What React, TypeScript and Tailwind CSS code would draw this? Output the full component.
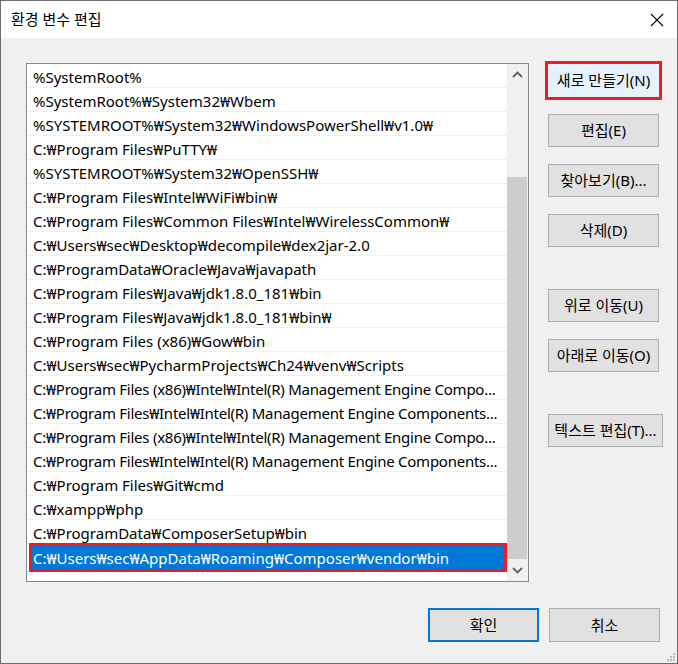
import React from "react";

const paths: string[] = [
  "%SystemRoot%",
  "%SystemRoot%₩System32₩Wbem",
  "%SYSTEMROOT%₩System32₩WindowsPowerShell₩v1.0₩",
  "C:₩Program Files₩PuTTY₩",
  "%SYSTEMROOT%₩System32₩OpenSSH₩",
  "C:₩Program Files₩Intel₩WiFi₩bin₩",
  "C:₩Program Files₩Common Files₩Intel₩WirelessCommon₩",
  "C:₩Users₩sec₩Desktop₩decompile₩dex2jar-2.0",
  "C:₩ProgramData₩Oracle₩Java₩javapath",
  "C:₩Program Files₩Java₩jdk1.8.0_181₩bin",
  "C:₩Program Files₩Java₩jdk1.8.0_181₩bin₩",
  "C:₩Program Files (x86)₩Gow₩bin",
  "C:₩Users₩sec₩PycharmProjects₩Ch24₩venv₩Scripts",
  "C:₩Program Files (x86)₩Intel₩Intel(R) Management Engine Compo...",
  "C:₩Program Files₩Intel₩Intel(R) Management Engine Components...",
  "C:₩Program Files (x86)₩Intel₩Intel(R) Management Engine Compo...",
  "C:₩Program Files₩Intel₩Intel(R) Management Engine Components...",
  "C:₩Program Files₩Git₩cmd",
  "C:₩xampp₩php",
  "C:₩ProgramData₩ComposerSetup₩bin",
];

const selected = "C:₩Users₩sec₩AppData₩Roaming₩Composer₩vendor₩bin";

const font = "font-['Noto_Sans','Noto_Sans_CJK_KR',sans-serif]";

// plain win10 style button
const Btn = ({ label, wide }: { label: string; wide?: boolean }): JSX.Element => (
  <div
    className={`${wide ? "w-[115px]" : "w-[111px]"} h-[33px] flex items-center justify-center bg-[#e1e1e1] border border-[#adadad] text-[15px] text-black`}
  >
    {label}
  </div>
);

const App = (): JSX.Element => {
  return (
    <div className={`w-[678px] h-[664px] border border-[#6d6d6d] flex flex-col bg-[#f0f0f0] relative ${font}`}>
      {/* title bar */}
      <div className="h-[37px] bg-white flex items-center justify-between pl-[10px] pr-[13px] shrink-0">
        <span className="text-[15px] text-black">환경 변수 편집</span>
        <svg width="14" height="14" viewBox="0 0 14 14">
          <path d="M1 1 L13 13 M13 1 L1 13" stroke="#000" strokeWidth="1.1" fill="none" />
        </svg>
      </div>

      <div className="flex pl-[25px] pt-[25px]">
        {/* list box */}
        <div className="w-[503px] h-[519px] border border-[#828790] bg-white flex">
          <div className="w-[480px] flex flex-col">
            {paths.map((p, i) => (
              <div
                key={i}
                className={`h-[24px] shrink-0 border-b border-[#f0f0f0] flex items-center pl-[6px] pt-[3px] text-[15px] text-black whitespace-nowrap overflow-hidden ${
                  p.endsWith("...") ? "tracking-[-0.25px]" : ""
                }`}
              >
                {p}
              </div>
            ))}
            <div className="h-[24px] shrink-0 pt-[2px]">
              <div className="ml-[5px] w-[472px] h-[23px] bg-[#0078d7] outline-[3px] outline-solid outline-[#ed1c24] flex items-center pl-[1px] pt-[2px] text-[15px] text-white whitespace-nowrap">
                {selected}
              </div>
            </div>
          </div>
          {/* scrollbar */}
          <div className="w-[21px] bg-[#f0f0f0] flex flex-col">
            <div className="h-[21px] flex items-center justify-center">
              <svg width="11" height="7" viewBox="0 0 11 7">
                <path d="M1 6 L5.5 1.5 L10 6" stroke="#606060" strokeWidth="1.8" fill="none" />
              </svg>
            </div>
            <div className="h-[92px]" />
            <div className="h-[382px] bg-[#cdcdcd] mr-[1px]" />
            <div className="flex-1 flex items-center justify-center">
              <svg width="11" height="7" viewBox="0 0 11 7">
                <path d="M1 1 L5.5 5.5 L10 1" stroke="#606060" strokeWidth="1.8" fill="none" />
              </svg>
            </div>
          </div>
        </div>

        {/* right buttons */}
        <div className="ml-[19px] pt-[1px] flex flex-col">
          <div className="w-[111px] h-[33px] flex items-center justify-center bg-[#e5f1fb] outline-[3px] outline-solid outline-[#ed1c24] text-[15px] text-black">
            새로 만들기(N)
          </div>
          <div className="mt-[17px] flex flex-col gap-[17px]">
            <Btn label="편집(E)" />
            <Btn label="찾아보기(B)..." />
            <Btn label="삭제(D)" />
          </div>
          <div className="mt-[42px] flex flex-col gap-[17px]">
            <Btn label="위로 이동(U)" />
            <Btn label="아래로 이동(O)" />
          </div>
          <div className="mt-[42px]">
            <Btn label="텍스트 편집(T)..." wide />
          </div>
        </div>
      </div>

      {/* bottom buttons */}
      <div className="flex justify-end gap-[10px] pr-[17px] mt-[26px]">
        <div className="w-[111px] h-[34px] flex items-center justify-center bg-[#e1e1e1] border-2 border-[#0078d7] text-[15px] text-black">
          확인
        </div>
        <div className="w-[111px] h-[34px] flex items-center justify-center bg-[#e1e1e1] border border-[#adadad] text-[15px] text-black">
          취소
        </div>
      </div>

      {/* size grip */}
      <svg className="absolute right-[1px] bottom-[1px]" width="12" height="12" viewBox="0 0 12 12">
        {[
          [9, 1],
          [6, 4],
          [9, 4],
          [3, 7],
          [6, 7],
          [9, 7],
        ].map(([x, y], i) => (
          <rect key={i} x={x} y={y + 2} width="2" height="2" fill="#bcbcbc" />
        ))}
      </svg>
    </div>
  );
};

export default App;
